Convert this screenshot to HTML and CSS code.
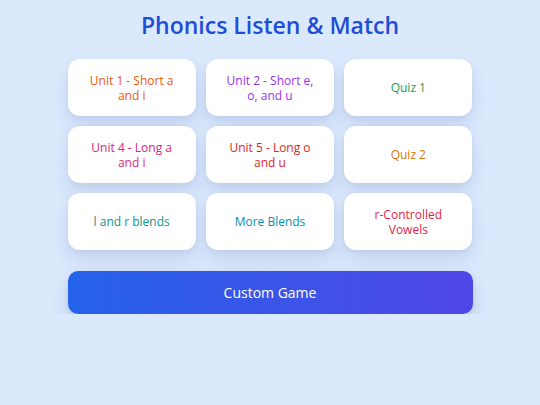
FILE: index.html
```html
<!DOCTYPE html>
<html>
<head>
<meta charset="utf-8">
<link rel="stylesheet" href="styles.css">
</head>
<body>
<div class="page">
  <h1 class="title">Phonics Listen &amp; Match</h1>
  <div class="grid">
    <button class="card c-orange">Unit 1 - Short a and i</button>
    <button class="card c-purple">Unit 2 - Short e, o, and u</button>
    <button class="card c-green">Quiz 1</button>
    <button class="card c-pink">Unit 4 - Long a and i</button>
    <button class="card c-red">Unit 5 - Long o and u</button>
    <button class="card c-amber">Quiz 2</button>
    <button class="card c-teal">l and r blends</button>
    <button class="card c-cyan">More Blends</button>
    <button class="card c-rose">r-Controlled Vowels</button>
  </div>
  <button class="custom">Custom Game</button>
</div>
</body>
</html>
```
FILE: styles.css
```css
html, body {
  margin: 0;
  padding: 0;
  background: #dbe9fd;
  font-family: "Open Sans", "DejaVu Sans", sans-serif;
}
.page {
  width: 405px;
  margin: 0 auto;
  padding-top: 11px;
  display: flex;
  flex-direction: column;
}
.title {
  margin: 0 0 20px 0;
  text-align: center;
  font-size: 23px;
  line-height: 28px;
  font-weight: 600;
  color: #1d4ed8;
  letter-spacing: 0;
}
.grid {
  display: grid;
  grid-template-columns: repeat(3, 1fr);
  gap: 10px;
}
.card {
  height: 57px;
  border: none;
  background: #ffffff;
  border-radius: 12px;
  box-shadow: 0 10px 18px rgba(30, 64, 140, 0.12), 0 2px 5px rgba(30, 64, 140, 0.06);
  font-family: inherit;
  font-size: 12px;
  font-weight: 400;
  line-height: 15px;
  padding: 0 16px;
  display: flex;
  align-items: center;
  justify-content: center;
  text-align: center;
}
.c-orange { color: #ea580c; }
.c-purple { color: #9333ea; }
.c-green { color: #16a34a; }
.c-pink { color: #db2777; }
.c-red { color: #dc2626; }
.c-amber { color: #d97706; }
.c-teal { color: #0d9488; }
.c-cyan { color: #0891b2; }
.c-rose { color: #e11d48; }
.custom {
  margin-top: 21px;
  height: 43px;
  border: none;
  border-radius: 10px;
  background: linear-gradient(90deg, #2563eb, #4f46e5);
  color: #ffffff;
  font-family: inherit;
  font-size: 14px;
  font-weight: 400;
  box-shadow: 0 10px 18px rgba(30, 64, 140, 0.16), 0 2px 5px rgba(30, 64, 140, 0.08);
}
```
